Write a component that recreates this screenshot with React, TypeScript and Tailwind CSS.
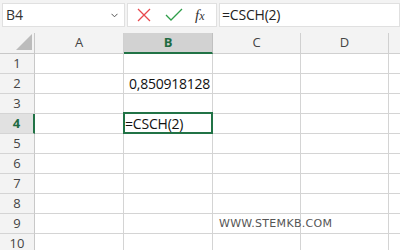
import React from "react";

const GRID = "grid grid-cols-[35px_89px_89px_88px_88px_11px]";

function Cell({ children, className = "" }: { children?: React.ReactNode; className?: string }) {
  return (
    <div className={`h-[20px] border-r border-b border-[#d4d4d4] bg-white relative ${className}`}>{children}</div>
  );
}

export default function App() {
  const rows = [1, 2, 3, 4, 5, 6, 7, 8, 9, 10];
  return (
    <div className="w-[400px] h-[250px] overflow-hidden bg-white font-['Open_Sans',sans-serif] text-[#222]">
      {/* toolbar */}
      <div className="h-[33px] bg-[#f3f3f3] flex items-start pt-[3px] pl-[2px]">
        <div className="w-[123px] h-[24px] bg-white border border-[#e0e0e0] flex items-center justify-between pl-[3px] pr-[6px]">
          <span className="text-[14px] leading-none text-[#333]">B4</span>
          <svg width="7" height="5" viewBox="0 0 7 5" className="mt-[1px]">
            <path d="M0.5 0.8 L3.5 3.8 L6.5 0.8" stroke="#555" strokeWidth="1" fill="none" />
          </svg>
        </div>
        <div className="ml-[2px] w-[90px] h-[24px] bg-white border border-[#e0e0e0] flex items-center">
          <svg width="14" height="14" viewBox="0 0 14 14" className="ml-[9px]">
            <path d="M1 1 L13 13 M13 1 L1 13" stroke="#e8484d" strokeWidth="1.3" fill="none" />
          </svg>
          <svg width="18" height="14" viewBox="0 0 18 14" className="ml-[14px]">
            <path d="M1 7 L6 12 L17 1" stroke="#2f9e4a" strokeWidth="1.3" fill="none" />
          </svg>
          <span className="ml-[12px] text-[15px] italic leading-none text-[#333] font-['Liberation_Serif',serif]">
            f<span className="text-[12px]">x</span>
          </span>
        </div>
        <div className="ml-[2px] flex-1 h-[24px] bg-white border border-[#e0e0e0] flex items-center pl-[2px]">
          <span className="text-[14px] leading-none text-[#222] tracking-[-0.2px]">=CSCH(2)</span>
        </div>
      </div>

      {/* header row */}
      <div className={`${GRID} h-[21px]`}>
        <div className="h-[21px] bg-[#f3f3f3] border-r border-b border-[#c8c8c8] relative">
          <svg width="16" height="16" viewBox="0 0 16 16" className="absolute right-[2px] bottom-[3px]">
            <path d="M16 0 L16 16 L0 16 Z" fill="#bcbcbc" />
          </svg>
        </div>
        <div className="h-[21px] bg-[#f3f3f3] border-r border-b border-[#d0d0d0] flex items-center justify-center text-[13px] text-[#444]">A</div>
        <div className="h-[21px] bg-[#d2d2d2] border-r border-[#c0c0c0] border-b-2 border-b-[#217346] flex items-center justify-center text-[13px] font-bold text-[#1e6b41]">B</div>
        <div className="h-[21px] bg-[#f3f3f3] border-r border-b border-[#d0d0d0] flex items-center justify-center text-[13px] text-[#444]">C</div>
        <div className="h-[21px] bg-[#f3f3f3] border-r border-b border-[#d0d0d0] flex items-center justify-center text-[13px] text-[#444]">D</div>
        <div className="h-[21px] bg-[#f3f3f3] border-b border-[#d0d0d0]"></div>
      </div>

      {rows.map((r) => (
        <div key={r} className={GRID}>
          <div
            className={`h-[20px] border-b border-[#d4d4d4] flex items-center justify-center text-[13px] ${
              r === 4
                ? "bg-[#e1e1e1] border-r-2 border-r-[#217346] font-bold text-[#1e6b41]"
                : "bg-[#f3f3f3] border-r border-r-[#c8c8c8] text-[#444]"
            }`}
          >
            {r}
          </div>
          <Cell />
          <Cell className="flex items-center justify-end pr-[2px]">
            {r === 2 && <span className="text-[14px] leading-none text-[#111] tracking-[-0.25px]">0,850918128</span>}
            {r === 4 && (
              <>
                <span className="text-[14px] leading-none text-[#111] pl-[1px] mr-auto tracking-[-0.2px]">=CSCH(2)</span>
                <div className="absolute left-[-1px] right-[-1px] top-[-2px] bottom-[-1px] border-2 border-[#217346]"></div>
              </>
            )}
          </Cell>
          <Cell className="overflow-visible">
            {r === 9 && (
              <span className="absolute left-[6px] top-[4px] whitespace-nowrap text-[11px] leading-none tracking-[0.3px] text-[#555] font-['DejaVu_Sans',sans-serif] z-10">
                WWW.STEMKB.COM
              </span>
            )}
          </Cell>
          <Cell />
          <div className="h-[20px] border-b border-[#d4d4d4] bg-white"></div>
        </div>
      ))}
    </div>
  );
}
